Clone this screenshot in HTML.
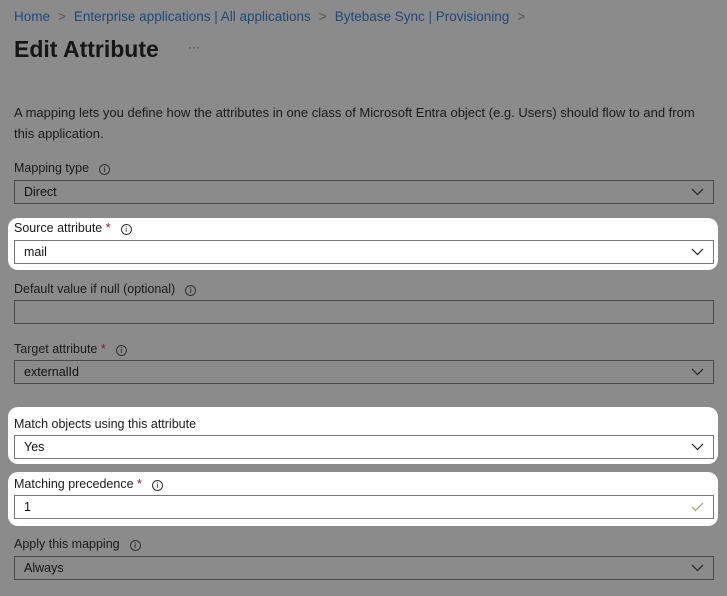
<!DOCTYPE html>
<html><head><style>
*{margin:0;padding:0;box-sizing:border-box}
body{width:727px;height:596px;background:#8b8b8b;font-family:"Liberation Sans",sans-serif;position:relative;overflow:hidden;color:#1a1a1a}
.a{position:absolute}
.crumb{left:14px;top:9px;font-size:13.5px;color:#1f4a78;white-space:nowrap}
.crumb span.s{color:#555;margin:0 8px}
h1{position:absolute;left:14px;top:36px;font-size:23px;font-weight:bold;color:#161616}
.dots{left:188px;top:40px;color:#444;font-size:12px}
.desc{left:14px;top:102px;font-size:13px;line-height:21px;width:700px;color:#1a1a1a}
.hl{position:absolute;left:8px;width:710px;background:#fff;border-radius:10px}
.lbl{position:absolute;left:14px;font-size:12.5px;color:#1a1a1a}
.lbl .r{color:#8b1a2b}
.info{display:inline-block;width:11px;height:11px;border:1px solid #333;border-radius:50%;font-size:8px;line-height:9px;text-align:center;margin-left:10px;vertical-align:0px}
.in{position:absolute;left:14px;width:700px;height:24px;border:1px solid #4a4a4a;font-size:12.5px;padding-left:9px;line-height:22px;color:#111}
.w{background:#fff;border-color:#777}
.chev{position:absolute;right:9px;top:6px}
</style></head><body>
<div class="a crumb">Home<span class="s">&gt;</span>Enterprise applications | All applications<span class="s">&gt;</span>Bytebase Sync | Provisioning<span class="s">&gt;</span></div>
<h1>Edit Attribute</h1>
<div class="a dots">···</div>
<div class="a desc">A mapping lets you define how the attributes in one class of Microsoft Entra object (e.g. Users) should flow to and from this application.</div>

<div class="hl" style="top:218px;height:52px"></div>
<div class="hl" style="top:407px;height:57px"></div>
<div class="hl" style="top:472px;height:54px"></div>

<div class="lbl" style="top:161px">Mapping type<span class="info">i</span></div>
<div class="in" style="top:180px">Direct<svg class="chev" width="13" height="9" viewBox="0 0 13 9"><path d="M1 2l5.5 5.5L12 2" fill="none" stroke="#222" stroke-width="1.2"/></svg></div>

<div class="lbl" style="top:221px">Source attribute <span class="r">*</span><span class="info">i</span></div>
<div class="in w" style="top:240px">mail<svg class="chev" width="13" height="9" viewBox="0 0 13 9"><path d="M1 2l5.5 5.5L12 2" fill="none" stroke="#222" stroke-width="1.2"/></svg></div>

<div class="lbl" style="top:282px">Default value if null (optional)<span class="info">i</span></div>
<div class="in" style="top:300px"></div>

<div class="lbl" style="top:342px">Target attribute <span class="r">*</span><span class="info">i</span></div>
<div class="in" style="top:360px">externalId<svg class="chev" width="13" height="9" viewBox="0 0 13 9"><path d="M1 2l5.5 5.5L12 2" fill="none" stroke="#222" stroke-width="1.2"/></svg></div>

<div class="lbl" style="top:417px">Match objects using this attribute</div>
<div class="in w" style="top:435px">Yes<svg class="chev" width="13" height="9" viewBox="0 0 13 9"><path d="M1 2l5.5 5.5L12 2" fill="none" stroke="#222" stroke-width="1.2"/></svg></div>

<div class="lbl" style="top:477px">Matching precedence <span class="r">*</span><span class="info">i</span></div>
<div class="in w" style="top:495px">1<svg class="chev" width="13" height="10" viewBox="0 0 13 10"><path d="M1 5l3.5 3.5L12 1" fill="none" stroke="#8fae6a" stroke-width="1.2"/></svg></div>

<div class="lbl" style="top:537px">Apply this mapping<span class="info">i</span></div>
<div class="in" style="top:556px">Always<svg class="chev" width="13" height="9" viewBox="0 0 13 9"><path d="M1 2l5.5 5.5L12 2" fill="none" stroke="#222" stroke-width="1.2"/></svg></div>
</body></html>
